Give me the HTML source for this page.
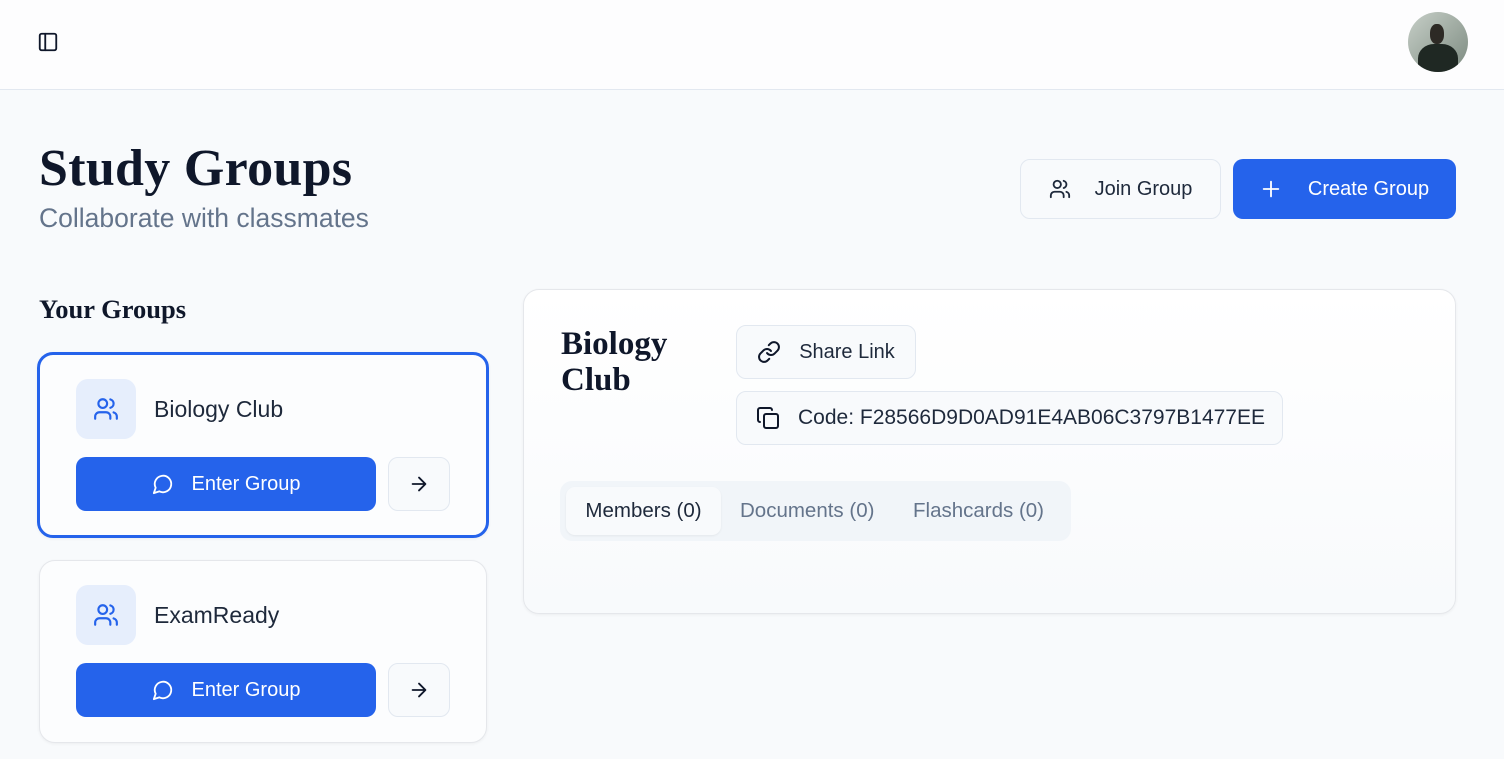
<!DOCTYPE html>
<html><head><meta charset="utf-8"><style>
*{box-sizing:border-box;margin:0;padding:0}
body{width:1504px;height:759px;overflow:hidden;background:#f8fafc;font-family:"Liberation Sans",sans-serif;color:#0f172a;position:relative}
.abs{position:absolute}
.hdr{left:0;top:0;width:1504px;height:90px;background:#fdfdfe;border-bottom:1px solid #e2e8f0}
.serif{font-family:"Liberation Serif",serif;font-weight:bold}
.btn{display:flex;align-items:center;justify-content:center;border-radius:10px;font-size:20px}
.out{background:#f8fafc;border:1px solid #e2e8f0;color:#1e293b}
.blue{background:#2563eb;color:#fff}
.card{background:#fcfdfe;border:1px solid #e5e7eb;border-radius:16px;box-shadow:0 1px 3px rgba(0,0,0,.05)}
.ib{background:#e6eefc;border-radius:12px;display:flex;align-items:center;justify-content:center}
svg{fill:none;stroke-linecap:round;stroke-linejoin:round}
</style></head><body>
<div class="abs hdr"></div>
<svg class="abs" style="left:37px;top:31px" width="22" height="22" viewBox="0 0 24 24" stroke="#0f172a" stroke-width="2"><rect x="3" y="3" width="18" height="18" rx="2"/><path d="M9 3v18"/></svg>
<div class="abs" style="left:1408px;top:12px;width:60px;height:60px;border-radius:50%;overflow:hidden;background:linear-gradient(135deg,#c7cfc8 0%,#a5b0a7 45%,#7c8a80 100%)">
<div class="abs" style="left:22px;top:12px;width:14px;height:20px;border-radius:45%;background:#2d2a25"></div>
<div class="abs" style="left:10px;top:32px;width:40px;height:36px;border-radius:40% 40% 0 0;background:#1f2823"></div></div>

<div class="abs serif" style="left:39px;top:140px;font-size:52px;line-height:58px;color:#0f172a;letter-spacing:0.3px">Study Groups</div>
<div class="abs" style="left:39px;top:203px;font-size:26.5px;color:#64748b">Collaborate with classmates</div>

<div class="abs btn out" style="left:1020px;top:159px;width:201px;height:60px">
<svg width="22" height="22" viewBox="0 0 24 24" stroke="#1e293b" stroke-width="2" style="margin-right:24px"><path d="M16 21v-2a4 4 0 0 0-4-4H6a4 4 0 0 0-4 4v2"/><circle cx="9" cy="7" r="4"/><path d="M22 21v-2a4 4 0 0 0-3-3.87M16 3.13a4 4 0 0 1 0 7.75"/></svg>Join Group</div>
<div class="abs btn blue" style="left:1233px;top:159px;width:223px;height:60px">
<svg width="22" height="22" viewBox="0 0 24 24" stroke="#fff" stroke-width="2" style="margin-right:26px"><path d="M12 4v16M4 12h16"/></svg>Create Group</div>

<div class="abs serif" style="left:39px;top:294px;font-size:26.5px">Your Groups</div>

<div class="abs card" style="left:37px;top:352px;width:452px;height:186px;border:3px solid #2563eb"></div>
<div class="abs ib" style="left:76px;top:379px;width:60px;height:60px"><svg width="26" height="26" viewBox="0 0 24 24" stroke="#2563eb" stroke-width="2"><path d="M16 21v-2a4 4 0 0 0-4-4H6a4 4 0 0 0-4 4v2"/><circle cx="9" cy="7" r="4"/><path d="M22 21v-2a4 4 0 0 0-3-3.87M16 3.13a4 4 0 0 1 0 7.75"/></svg></div>
<div class="abs" style="left:154px;top:396px;font-size:23px;color:#1e293b">Biology Club</div>
<div class="abs btn blue" style="left:76px;top:457px;width:300px;height:54px"><svg width="22" height="22" viewBox="0 0 24 24" stroke="#fff" stroke-width="2" style="margin-right:18px"><path d="M7.9 20A9 9 0 1 0 4 16.1L2 22z"/></svg>Enter Group</div>
<div class="abs btn out" style="left:388px;top:457px;width:62px;height:54px"><svg width="22" height="22" viewBox="0 0 24 24" stroke="#0f172a" stroke-width="2"><path d="M5 12h14M12 5l7 7-7 7"/></svg></div>

<div class="abs card" style="left:39px;top:560px;width:448px;height:183px"></div>
<div class="abs ib" style="left:76px;top:585px;width:60px;height:60px"><svg width="26" height="26" viewBox="0 0 24 24" stroke="#2563eb" stroke-width="2"><path d="M16 21v-2a4 4 0 0 0-4-4H6a4 4 0 0 0-4 4v2"/><circle cx="9" cy="7" r="4"/><path d="M22 21v-2a4 4 0 0 0-3-3.87M16 3.13a4 4 0 0 1 0 7.75"/></svg></div>
<div class="abs" style="left:154px;top:602px;font-size:23px;color:#1e293b">ExamReady</div>
<div class="abs btn blue" style="left:76px;top:663px;width:300px;height:54px"><svg width="22" height="22" viewBox="0 0 24 24" stroke="#fff" stroke-width="2" style="margin-right:18px"><path d="M7.9 20A9 9 0 1 0 4 16.1L2 22z"/></svg>Enter Group</div>
<div class="abs btn out" style="left:388px;top:663px;width:62px;height:54px"><svg width="22" height="22" viewBox="0 0 24 24" stroke="#0f172a" stroke-width="2"><path d="M5 12h14M12 5l7 7-7 7"/></svg></div>

<div class="abs card" style="left:523px;top:289px;width:933px;height:325px;background:linear-gradient(180deg,#fff,#f8fafc)"></div>
<div class="abs serif" style="left:561px;top:326px;font-size:33px;line-height:36px">Biology<br>Club</div>
<div class="abs btn out" style="left:736px;top:325px;width:180px;height:54px;font-size:20px"><svg width="24" height="24" viewBox="0 0 24 24" stroke="#0f172a" stroke-width="2" style="margin-right:18px"><path d="M10 13a5 5 0 0 0 7.54.54l3-3a5 5 0 0 0-7.07-7.07l-1.72 1.71"/><path d="M14 11a5 5 0 0 0-7.54-.54l-3 3a5 5 0 0 0 7.07 7.07l1.71-1.71"/></svg>Share Link</div>
<div class="abs btn out" style="left:736px;top:391px;width:547px;height:54px;font-size:21px;justify-content:flex-start;padding-left:19px"><svg width="24" height="24" viewBox="0 0 24 24" stroke="#0f172a" stroke-width="2" style="margin-right:18px"><rect x="8" y="8" width="14" height="14" rx="2"/><path d="M4 16c-1.1 0-2-.9-2-2V4c0-1.1.9-2 2-2h10c1.1 0 2 .9 2 2"/></svg>Code: F28566D9D0AD91E4AB06C3797B1477EE</div>
<div class="abs" style="left:560px;top:481px;width:511px;height:60px;background:#f1f5f9;border-radius:12px"></div>
<div class="abs btn" style="left:566px;top:487px;width:155px;height:48px;background:#f8fafc;border-radius:9px;box-shadow:0 1px 2px rgba(0,0,0,.06);color:#1e293b;font-size:20.5px">Members (0)</div>
<div class="abs" style="left:740px;top:499px;font-size:20.5px;color:#64748b">Documents (0)</div>
<div class="abs" style="left:913px;top:499px;font-size:20.5px;color:#64748b">Flashcards (0)</div>
</body></html>
